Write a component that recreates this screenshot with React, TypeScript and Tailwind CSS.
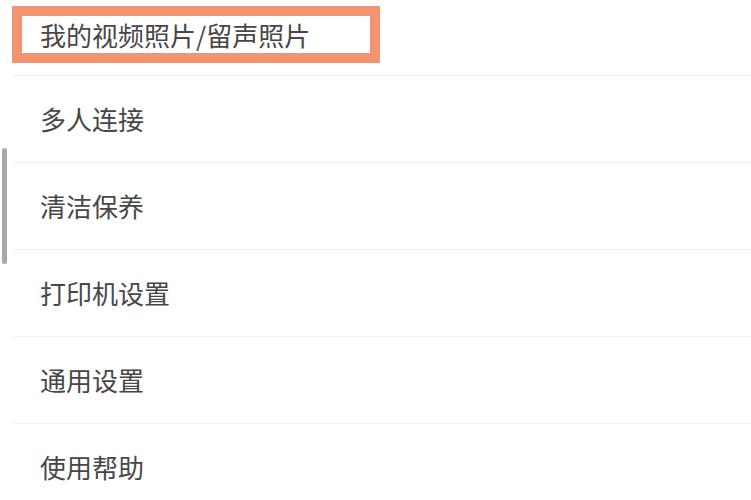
const items = ['多人连接', '清洁保养', '打印机设置', '通用设置', '使用帮助'];

const font = { fontFamily: '"Noto Sans CJK SC", "Noto Sans", sans-serif' };

export default function App() {
  return (
    <div className="relative h-[500px] w-[751px] overflow-hidden bg-white" style={font}>
      {/* scrollbar */}
      <div className="absolute left-[2px] top-[148px] h-[116px] w-[5px] rounded-full bg-[#a9a9a9]" />

      <div className="ml-[12px]">
        {/* highlighted first row */}
        <div className="h-[76px] border-b border-[#f1f1f1] pt-[6px]">
          <div className="flex h-[57px] w-[368px] items-center border-[10px] border-[#f39471] pl-[18px]">
            <span className="text-[26px] leading-none text-[#474747]">我的视频照片/留声照片</span>
          </div>
        </div>

        {items.map((label) => (
          <div key={label} className="flex h-[87px] items-center border-b border-[#f1f1f1] pl-[28px]">
            <span className="text-[26px] leading-none text-[#474747]">{label}</span>
          </div>
        ))}
      </div>
    </div>
  );
}
